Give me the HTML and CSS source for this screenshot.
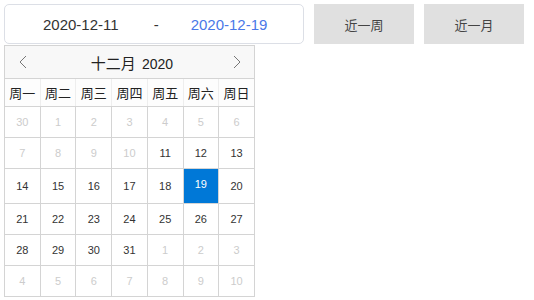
FILE: index.html
```html
<!DOCTYPE html>
<html lang="zh">
<head>
  <meta charset="UTF-8" />
  <title>日期范围选择</title>
  <link rel="stylesheet" href="styles.css">
</head>
<body>

  <div class="toolbar">
    <div class="range">
      <span class="date start">2020-12-11</span>
      <span class="sep">-</span>
      <span class="date end">2020-12-19</span>
    </div>
    <button class="quick">近一周</button>
    <button class="quick">近一月</button>
  </div>

  <table class="calendar">
    <thead>
      <tr class="head">
        <th colspan="7">
          <div class="nav">
            <svg class="arrow" width="10" height="14" viewBox="0 0 10 14"><path d="M8 1 L2 7 L8 13" fill="none" stroke="#777" stroke-width="1"/></svg>
            <span class="title">十二月 <span class="year">2020</span></span>
            <svg class="arrow" width="10" height="14" viewBox="0 0 10 14"><path d="M2 1 L8 7 L2 13" fill="none" stroke="#777" stroke-width="1"/></svg>
          </div>
        </th>
      </tr>
      <tr class="week">
        <th>周一</th><th>周二</th><th>周三</th><th>周四</th><th>周五</th><th>周六</th><th>周日</th>
      </tr>
    </thead>
    <tbody>
      <tr><td class="off">30</td><td class="off">1</td><td class="off">2</td><td class="off">3</td><td class="off">4</td><td class="off">5</td><td class="off">6</td></tr>
      <tr><td class="off">7</td><td class="off">8</td><td class="off">9</td><td class="off">10</td><td>11</td><td>12</td><td>13</td></tr>
      <tr><td>14</td><td>15</td><td>16</td><td>17</td><td>18</td><td class="active">19</td><td>20</td></tr>
      <tr><td>21</td><td>22</td><td>23</td><td>24</td><td>25</td><td>26</td><td>27</td></tr>
      <tr><td>28</td><td>29</td><td>30</td><td>31</td><td class="off">1</td><td class="off">2</td><td class="off">3</td></tr>
      <tr><td class="off">4</td><td class="off">5</td><td class="off">6</td><td class="off">7</td><td class="off">8</td><td class="off">9</td><td class="off">10</td></tr>
    </tbody>
  </table>

</body>
</html>
```

FILE: styles.css
```css
body {
  margin: 0;
  padding: 4px;
  background: #fff;
  font-family: "Liberation Sans", "Noto Sans CJK SC", sans-serif;
  color: #333;
}

.toolbar {
  display: flex;
  gap: 10px;
}

.range {
  width: 300px;
  height: 40px;
  box-sizing: border-box;
  border: 1px solid #dcdfe6;
  border-radius: 5px;
  display: flex;
  align-items: center;
  font-size: 15px;
}

.start {
  padding-left: 38px;
}

.sep {
  margin-left: 35px;
}

.end {
  margin-left: 32px;
  color: #4a78e8;
}

.quick {
  width: 100px;
  height: 40px;
  border: none;
  background: #e0e0e0;
  color: #444;
  font-family: inherit;
  font-size: 13px;
}

.calendar {
  margin-top: 1px;
  width: 251px;
  border-collapse: collapse;
  table-layout: fixed;
  font-size: 11px;
}

.calendar th,
.calendar td {
  border: 1px solid #d4d4d4;
  text-align: center;
  padding: 0;
}

.head th {
  height: 32px;
  background: #f8f8f8;
  font-weight: normal;
}

.nav {
  display: flex;
  align-items: center;
  justify-content: space-between;
  padding: 0 12px 0 13px;
}

.title {
  font-size: 15px;
  color: #222;
  margin-left: 4px;
}

.year {
  font-size: 14px;
  margin-left: 2px;
}

.week th {
  height: 27px;
  font-size: 13px;
  font-weight: normal;
  color: #222;
  background: #fdfdfd;
  border-left-color: #eeeeee;
  border-right-color: #eeeeee;
}

.week th:first-child { border-left-color: #d4d4d4; }
.week th:last-child { border-right-color: #d4d4d4; }

.calendar td {
  height: 30px;
  color: #333;
}

.calendar td.off {
  color: #cccccc;
}

.calendar td.active {
  background: #0078d7;
  color: #fff;
  padding-bottom: 4px;
}
```
